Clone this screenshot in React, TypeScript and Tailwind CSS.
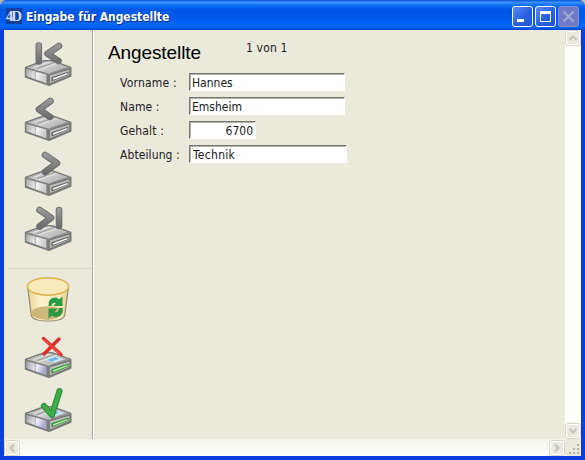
import type { ReactNode } from "react";

const uiFont = "font-['DejaVu_Sans_Condensed','DejaVu_Sans',sans-serif]";

function Drive({ color = false, children }: { color?: boolean; children?: ReactNode }) {
  return (
    <svg width="48" height="49" viewBox="0 0 48 49" className="block shrink-0" aria-hidden="true">
      <defs>
        <linearGradient id="side" x1="0" y1="0" x2="1" y2="0.3">
          <stop offset="0" stopColor="#a8a8a8" />
          <stop offset="0.6" stopColor="#f2f2f0" />
          <stop offset="1" stopColor="#cfcfcf" />
        </linearGradient>
        <linearGradient id="sideColor" x1="0" y1="0" x2="1" y2="0.3">
          <stop offset="0" stopColor="#9898a8" />
          <stop offset="0.6" stopColor="#f0f0fc" />
          <stop offset="1" stopColor="#a9a9cf" />
        </linearGradient>
        <linearGradient id="lid" x1="0" y1="0" x2="1" y2="0.6">
          <stop offset="0" stopColor="#9a9a9a" />
          <stop offset="0.5" stopColor="#cfcfcd" />
          <stop offset="1" stopColor="#b0b0b0" />
        </linearGradient>
        <linearGradient id="rod" gradientUnits="userSpaceOnUse" x1="0" y1="4" x2="0" y2="27">
          <stop offset="0" stopColor="#a0a0a0" />
          <stop offset="1" stopColor="#666666" />
        </linearGradient>
      </defs>
      <path d="M1.5 29.5 L20 22.7 L28 22.7 L46.8 29.5 L46.8 38 L25 47.3 L1.5 39Z" fill="#7f7f7d" stroke="#7b7b79" strokeWidth="1.4" strokeLinejoin="round" />
      <path d="M3 29.5 L20 23.5 L28 23.5 L45.5 29.5 L25 35.8Z" fill="url(#lid)" />
      <path d="M14.5 31.8 L33 25.3 M9 29.6L26 23.7" stroke="#e6e6e4" strokeWidth="1" />
      <path d="M13.3 30.6 L31 24.4 M27 35L44 29.2" stroke="#868684" strokeWidth=".8" />
      {color && <path d="M20 29.5 L29 26 L40 29.3 L30 32.6Z" fill="#cde8f5" />}
      {color && <path d="M23 30 L31 27 L35 29 L28 31.6Z" fill="#6cb7e7" />}
      <path d="M2.3 30.9 L22.3 36.6 L22.3 45.2 L2.3 38.1Z" fill={color ? "url(#sideColor)" : "url(#side)"} />
      <path d="M11.2 34V41" stroke="#969694" strokeWidth=".8" />
      <path d="M25.4 37 L45.8 31 L45.8 37.3 L25.4 46Z" fill="#bebebc" stroke="#777775" strokeWidth="1" />
      <path d="M27.4 39.2 L44.4 33.6 L44.4 36.8 L27.4 43.4Z" fill={color ? "#2e973a" : "#686866"} />
      <path d="M29 41 L43.4 35.6" stroke={color ? "#bdeca5" : "#fbfbf8"} strokeWidth="1.5" />
      {children}
    </svg>
  );
}

function Rod({ d }: { d: string }) {
  return (
    <g fill="none" strokeLinecap="round" strokeLinejoin="round" transform="translate(0.01 0)">
      <path d={d} stroke="#6c6c6c" strokeWidth="6.6" />
      <path d={d} stroke="url(#rod)" strokeWidth="4.8" />
    </g>
  );
}

function Trash() {
  return (
    <svg width="48" height="49" viewBox="0 0 48 49" className="block shrink-0" aria-hidden="true">
      <defs>
        <linearGradient id="bin" x1="0" x2="1">
          <stop offset="0" stopColor="#e9d28b" />
          <stop offset=".3" stopColor="#fbf1cb" />
          <stop offset=".75" stopColor="#f8ecc0" />
          <stop offset="1" stopColor="#e6ce88" />
        </linearGradient>
      </defs>
      <path d="M3.5 10 L7.3 39 Q8 45 24 45 Q40 45 40.7 39 L44.6 10Z" fill="url(#bin)" stroke="#928b72" strokeWidth="1.2" />
      <path d="M7.3 36.5 Q10 30.5 23 30.3 Q37 30.5 39.5 36 Q36 43 24 44 Q9 43 7.5 38Z" fill="#c8ad6c" opacity=".85" />
      <ellipse cx="24" cy="10.5" rx="20.6" ry="8.7" fill="#f8eabb" stroke="#dcb04a" strokeWidth="1.4" />
      <path d="M24.5 30 Q24 21 32.5 21.5 L35 23.5 L38.5 20.5 L38.5 30 L29 30 L32 27 Q28.5 26 27.5 30Z" fill="#2c9a44" />
      <path d="M39 32 Q38.5 42 30.5 41 L28 39.5 L24.5 42.5 L24.5 32.5 L33.5 32.5 L30.5 36 Q34.5 37 35 32Z" fill="#2c9a44" />
    </svg>
  );
}

function ScrollButton({ d }: { d: string }) {
  return (
    <div className="flex size-[16px] shrink-0 items-center justify-center rounded-[3px] border border-[#d9d7ca] bg-[#eceade] shadow-[inset_0_0_0_1px_#fffffc]">
      <svg width="10" height="10" viewBox="0 0 10 10" fill="none" stroke="#c6c5bb" strokeWidth="2.2" aria-hidden="true"><path d={d} /></svg>
    </div>
  );
}

function CaptionButton({ kind }: { kind: "min" | "max" | "close" }) {
  const disabled = kind === "close";
  return (
    <div className={`flex size-[21px] items-center justify-center rounded-[3px] border ${disabled ? "border-[#8290dc] bg-[#6f7ac6]" : "border-white bg-linear-to-br from-[#5e8df5] via-[#2b62df] to-[#2453d0]"}`}>
      <svg width="19" height="19" viewBox="0 0 19 19" fill="none" aria-hidden="true">
        {kind === "min" && <path d="M4 13.5h7" stroke="white" strokeWidth="3" />}
        {kind === "max" && <><path d="M4.5 5v9.5h10V5" stroke="white" /><path d="M4 5.5h11" stroke="white" strokeWidth="3" /></>}
        {disabled && <path d="M4.5 4.5l10 10M14.5 4.5l-10 10" stroke="#a0a8d8" strokeWidth="2" />}
      </svg>
    </div>
  );
}

const fieldStyle = "h-[18px] border border-t-[#77766f] border-l-[#77766f] border-r-white border-b-white bg-white px-[2px] text-[12px] leading-[18px] shadow-[inset_1px_1px_0_#b5b3a8]";

function Row({ label, value, width, labelSpacing }: { label: string; value: string; width: string; labelSpacing: string }) {
  return (
    <div className="flex h-[24px] items-start">
      <div className={`w-[69px] shrink-0 whitespace-nowrap text-[12px] leading-[20px] ${labelSpacing}`}>{label}</div>
      <div className={`${fieldStyle} ${width}`}>{value}</div>
    </div>
  );
}

export default function App() {
  return (
    <div className="h-[460px] w-[585px] overflow-hidden bg-[#b9b8a8]">
      <div className={`flex h-[460px] w-[585px] flex-col rounded-t-[7px] bg-[#0a3ee0] text-[#20201d] ${uiFont}`}>
        <header className="flex h-[30px] shrink-0 items-center rounded-t-[7px] bg-[linear-gradient(180deg,#0753d8_0%,#3b91ff_8%,#0870f5_18%,#0058e6_32%,#0059e9_60%,#0069ff_84%,#0062f4_92%,#0044cb_100%)] pr-[6px] pl-[6px]">
          <div className="mt-[2px] flex size-[16px] items-center justify-center bg-[#183d9c] pr-[2px] font-['Liberation_Serif',serif] text-[15px] leading-none font-bold tracking-[-2px] text-[#cbdcff]">4D</div>
          <div className="mt-[4px] ml-[4px] grow font-['DejaVu_Sans_Condensed',sans-serif] text-[12px] font-bold tracking-[-0.03px] whitespace-nowrap text-white [text-shadow:1px_1px_0_#0a318f]">Eingabe für Angestellte</div>
          <div className="mt-[3px] flex gap-[2px]">
            <CaptionButton kind="min" />
            <CaptionButton kind="max" />
            <CaptionButton kind="close" />
          </div>
        </header>
        <main className="mx-[4px] flex h-[426px] shrink-0 flex-col bg-[#ebe9d9]">
          <div className="flex h-[409px]">
            <nav className="flex w-[90px] shrink-0 flex-col border-r border-r-white pl-[20px] shadow-[inset_-1px_0_0_#aaa99c]">
              <div className="flex flex-col gap-[6px] pt-[8px]">
                <Drive><Rod d="M14.8 7.5V23.5L14.81 23.5" /><Rod d="M35 8L23.5 15.8L34.5 23" /></Drive>
                <Drive><Rod d="M26.5 8L15 16.5L26 24" /></Drive>
                <Drive><Rod d="M21 7L33 15.2L21 24" /></Drive>
                <Drive><Rod d="M15.5 7L27 14.8L15.5 23.5" /><Rod d="M35 7V23L35.01 23" /></Drive>
              </div>
              <div className="mt-[16px] mr-[2px] ml-[-16px] h-px shrink-0 bg-[#d6d3c2]" />
              <div className="flex flex-col gap-[5px] pt-[7px]">
                <Trash />
                <Drive color>
                  <path d="M19.5 8.5L37 24.5M35 9L20 24" stroke="#e12d25" strokeWidth="3.4" strokeLinecap="round" />
                  <path d="M20 9.3L36 24" stroke="#f84d42" strokeWidth="1.5" />
                </Drive>
                <Drive color>
                  <path d="M20 22L28 31L35.5 7" fill="none" stroke="#2d8a38" strokeWidth="6" strokeLinecap="round" strokeLinejoin="round" />
                  <path d="M20 22L28 31L35.5 7" fill="none" stroke="#3fae49" strokeWidth="3.8" strokeLinecap="round" strokeLinejoin="round" />
                </Drive>
              </div>
            </nav>
            <section className="grow pl-[14px]">
              <div className="flex h-[43px] items-start">
                <h1 className="w-[138px] pt-[11px] font-['Liberation_Sans',Arial,sans-serif] text-[19px] leading-[24px] font-normal tracking-[-0.1px] text-black">Angestellte</h1>
                <div className="pt-[9px] text-[12px] leading-[18px] tracking-[0.15px]">1 von 1</div>
              </div>
              <div className="pl-[12px]">
                <Row label="Vorname :" value="Hannes" width="w-[156px]" labelSpacing="tracking-[0.2px]" />
                <Row label="Name :" value="Emsheim" width="w-[156px]" labelSpacing="tracking-[0.1px]" />
                <Row label="Gehalt :" value="6700" width="w-[67px] text-right" labelSpacing="tracking-[0.15px]" />
                <Row label="Abteilung :" value="Technik" width="w-[158px] pl-[3px] tracking-[0.3px]" labelSpacing="tracking-[0.1px]" />
              </div>
            </section>
            <aside className="flex w-[16px] shrink-0 flex-col justify-between bg-[#fefefb]">
              <ScrollButton d="M1.5 7L5 3.5L8.5 7" />
              <ScrollButton d="M1.5 3L5 6.5L8.5 3" />
            </aside>
          </div>
          <footer className="flex h-[17px]">
            <div className="flex grow items-center justify-between bg-linear-to-b from-[#f3f2ea] to-[#fffffc]">
              <ScrollButton d="M7 1.5L3.5 5L7 8.5" />
              <ScrollButton d="M3 1.5L6.5 5L3 8.5" />
            </div>
            <svg width="16" height="17" viewBox="0 0 16 17" fill="#b6b4a4" aria-hidden="true">
              <path d="M12 5h2v2h-2zM8 9h2v2H8zM12 9h2v2h-2zM4 13h2v2H4zM8 13h2v2H8zM12 13h2v2h-2z" />
            </svg>
          </footer>
        </main>
      </div>
    </div>
  );
}
